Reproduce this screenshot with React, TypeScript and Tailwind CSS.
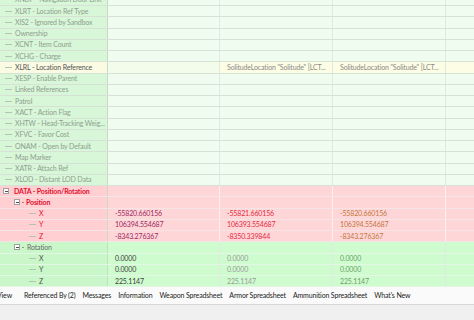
import React from "react";

type Row = {
  label: string;
  level: number;
  box?: boolean;
  kind: "empty" | "ref" | "data" | "pos" | "rot" | "rotHead" | "posHead";
  vals?: string[];
};

const top: Row[] = [
  "XNDP - Navigation Door Link",
  "XLRT - Location Ref Type",
  "XIS2 - Ignored by Sandbox",
  "Ownership",
  "XCNT - Item Count",
  "XCHG - Charge",
  "XLRL - Location Reference",
  "XESP - Enable Parent",
  "Linked References",
  "Patrol",
  "XACT - Action Flag",
  "XHTW - Head-Tracking Weig...",
  "XFVC - Favor Cost",
  "ONAM - Open by Default",
  "Map Marker",
  "XATR - Attach Ref",
  "XLOD - Distant LOD Data",
].map((l) =>
  l.startsWith("XLRL")
    ? {
        label: l,
        level: 1,
        kind: "ref" as const,
        vals: ["", 'SolitudeLocation "Solitude" [LCT...', 'SolitudeLocation "Solitude" [LCT...'],
      }
    : { label: l, level: 1, kind: "empty" as const }
);

const rest: Row[] = [
  { label: "DATA - Position/Rotation", level: 0, box: true, kind: "data" },
  { label: "Position", level: 1, box: true, kind: "posHead" },
  { label: "X", level: 2, kind: "pos", vals: ["-55820.660156", "-55821.660156", "-55820.660156"] },
  { label: "Y", level: 2, kind: "pos", vals: ["106394.554687", "106393.554687", "106394.554687"] },
  { label: "Z", level: 2, kind: "pos", vals: ["-8343.276367", "-8350.339844", "-8343.276367"] },
  { label: "Rotation", level: 1, box: true, kind: "rotHead" },
  { label: "X", level: 2, kind: "rot", vals: ["0.0000", "0.0000", "0.0000"] },
  { label: "Y", level: 2, kind: "rot", vals: ["0.0000", "0.0000", "0.0000"] },
  { label: "Z", level: 2, kind: "rot", vals: ["225.1147", "225.1147", "225.1147"] },
];

const rows = [...top, ...rest];

function Box() {
  return (
    <span className="inline-flex w-[6px] h-[6px] border border-[#a0a0a0] bg-white items-center justify-center shrink-0">
      <span className="block w-[3px] h-px bg-[#505050]" />
    </span>
  );
}

function GridRow({ r }: { r: Row }) {
  const isPink = r.kind === "data" || r.kind === "pos" || r.kind === "posHead";
  const isRot = r.kind === "rot" || r.kind === "rotHead";
  const isRef = r.kind === "ref";

  const firstBg = isPink
    ? "bg-[#ffcfd2]"
    : isRot
    ? "bg-[#c9f7c9]"
    : isRef
    ? "bg-[#fbfbe3]"
    : "bg-[#d8f6d8]";
  const cellBg = isPink ? "bg-[#ffd6d8]" : isRot ? "bg-[#cffccf]" : "bg-[#effcef]";
  const refCellBg = "bg-[#fcfde4]";
  const lineColor = isPink ? "border-[#f4e4e6]" : isRot ? "border-[#e4f6e4]" : "border-[#d6e2d6]";

  const labelColor = isPink
    ? "text-[#e4102e]"
    : isRot
    ? r.kind === "rotHead"
      ? "text-[#6a6a6a]"
      : "text-[#505050]"
    : isRef
    ? "text-[#555555]"
    : "text-[#8f9f8f]";

  const valColors =
    r.kind === "pos"
      ? ["text-[#9a2a60]", "text-[#e42a40]", "text-[#c2763e]"]
      : r.kind === "rot"
      ? ["text-[#3c3c3c]", "text-[#9a9a9a]", "text-[#6e9e6e]"]
      : ["text-[#808080]", "text-[#8a8a8a]", "text-[#8a8a8a]"];

  const indent =
    r.level === 0 ? "pl-[3px]" : r.level === 1 ? (r.box ? "pl-[14px]" : "pl-[5px]") : "pl-[29px]";

  const sep = isPink ? "border-[#fff0f0]" : "border-[#dfe9df]";

  return (
    <div className={`flex shrink-0 h-[11.25px] border-b ${lineColor}`}>
      <div
        className={`w-[108px] shrink-0 flex items-center ${indent} ${firstBg} border-r border-[#c4dcc4] overflow-hidden whitespace-nowrap`}
      >
        {r.box ? (
          <Box />
        ) : (
          <span className="block w-[7px] h-px bg-[#b4c4b4] mr-[3px] shrink-0" />
        )}
        {r.box && r.level === 1 ? (
          <span className={`block w-[2px] h-px ${isPink ? "bg-[#d07080]" : "bg-[#90a090]"} mx-[2px] shrink-0`} />
        ) : null}
        <span
          className={`${labelColor} ${isPink && r.level < 2 ? "font-bold" : ""} ${
            r.box && r.level === 0 ? "ml-[5px]" : ""
          } ${r.kind === "rotHead" ? "ml-[1px]" : ""}`}
        >
          {r.label}
        </span>
      </div>
      <div
        className={`w-[112px] shrink-0 flex items-center pl-[7px] ${isRef ? "bg-[#f3fbea]" : cellBg} border-r ${sep}`}
      >
        <span className={valColors[0]}>{r.vals?.[0]}</span>
      </div>
      <div
        className={`w-[113px] shrink-0 flex items-center pl-[7px] ${isRef ? refCellBg : cellBg} border-r ${sep} whitespace-nowrap overflow-hidden`}
      >
        <span className={valColors[1]}>{r.vals?.[1]}</span>
      </div>
      <div
        className={`w-[113px] shrink-0 flex items-center pl-[7px] ${isRef ? refCellBg : cellBg} border-r ${sep} whitespace-nowrap overflow-hidden`}
      >
        <span className={valColors[2]}>{r.vals?.[2]}</span>
      </div>
      <div className={`flex-1 ${isRef ? refCellBg : cellBg}`} />
    </div>
  );
}

export default function App() {
  const tabs = [
    "Referenced By (2)",
    "Messages",
    "Information",
    "Weapon Spreadsheet",
    "Armor Spreadsheet",
    "Ammunition Spreadsheet",
    "What's New",
  ];
  return (
    <div
      className="w-[474px] h-[320px] overflow-hidden bg-[#f0f0f0] text-[7px] leading-none tracking-[-0.15px]"
      style={{ fontFamily: 'Lato, "Noto Sans", sans-serif' }}
    >
      <div className="h-[287.25px] overflow-hidden bg-[#effcef]">
        <div className="-mt-[5.25px] flex flex-col">
          {rows.map((r, i) => (
            <GridRow key={i} r={r} />
          ))}
        </div>
      </div>
      <div className="h-[18px] flex items-center bg-[#fafafa] text-[#222] border-b border-[#d8d8d8]">
        <span className="-ml-[3px] pr-[12px] h-full flex items-center">View</span>
        {tabs.map((t) => (
          <span key={t} className="pr-[7px] h-full flex items-center">
            {t}
          </span>
        ))}
      </div>
      <div className="h-[15px] bg-[#f0f0f0]" />
    </div>
  );
}
